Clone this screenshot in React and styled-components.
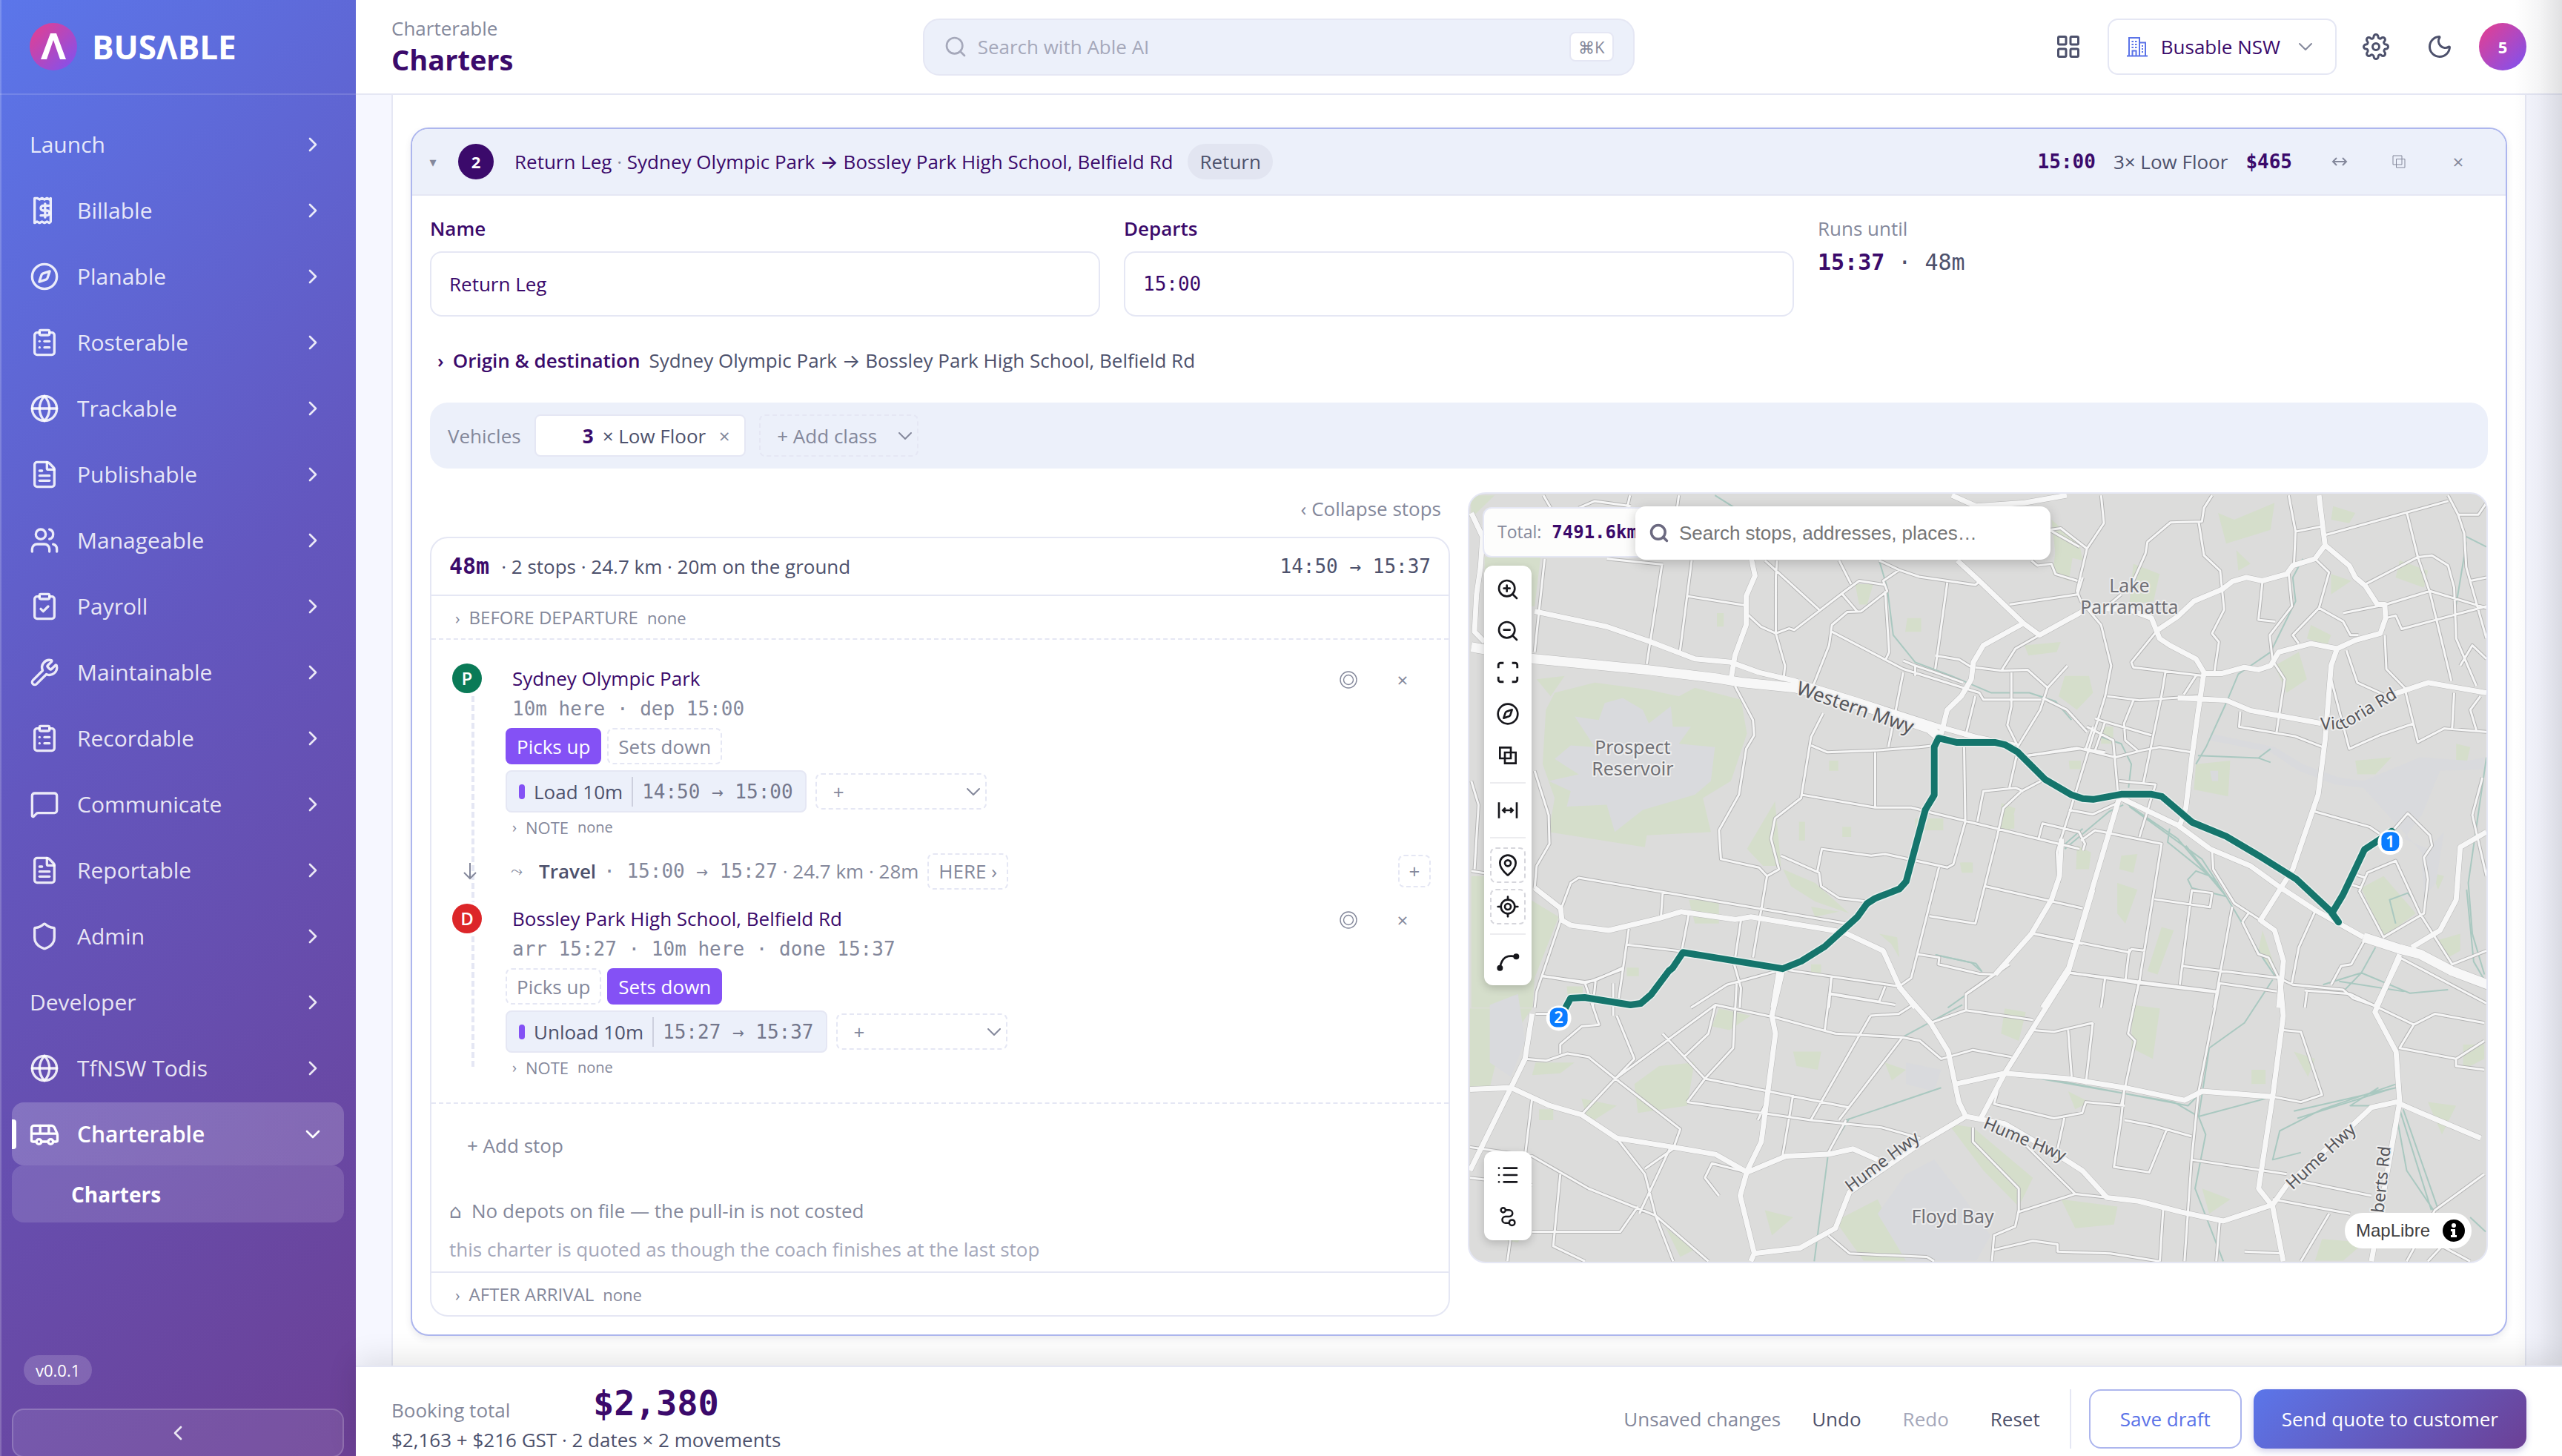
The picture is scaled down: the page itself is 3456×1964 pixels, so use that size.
import React, { useState } from 'react';
import styled, { createGlobalStyle, css } from 'styled-components';
import {
    ChevronDown, ChevronLeft, ChevronRight, ClipboardCheck, ClipboardList, Compass, FileText,
    Globe, LayoutGrid, List, LocateFixed, MapPin, Maximize, MessageSquare, Moon, Search,
    Shield, Users, Wrench, ZoomIn, ZoomOut,
} from 'lucide-react';
import { FiSettings } from 'react-icons/fi';

const sans = '"Open Sans", Inter, "DejaVu Sans", sans-serif';
const mono = '"DejaVu Sans Mono", "Liberation Mono", monospace';

const color = {
    ink: '#3b0a6b',
    text: '#4d516c',
    muted: '#84889b',
    faint: '#a5a8ba',
    line: '#e5e7f4',
    fill: '#ecf0fa',
    violet: '#8451f5',
    blue: '#5b73e8',
};

const GlobalStyle = createGlobalStyle`
    * { box-sizing: border-box; }
    body {
        margin: 0;
        background: #f6f7ff;
        color: ${color.text};
        font-family: ${sans};
        font-size: 26px;
        line-height: 40px;
    }
    button, input, select { font: inherit; color: inherit; margin: 0; }
    button { border: 0; background: none; padding: 0; cursor: pointer; }
    a { color: inherit; text-decoration: none; }
    ul { list-style: none; margin: 0; padding: 0; }
`;

/* ---------- icons that the package does not have in this shape ---------- */

const ReceiptIcon = (props) => (
    <svg width="40" height="40" viewBox="0 0 24 24" fill="none" stroke="currentColor" strokeWidth="2" strokeLinecap="round" strokeLinejoin="round" {...props}>
        <path d="M4 2v20l2-1 2 1 2-1 2 1 2-1 2 1 1-1V2l-1 1-2-1-2 1-2-1-2 1-2-1Z" />
        <path d="M15.500 8H11a2 2 0 1 0 0 4h3a2 2 0 1 1 0 4H9M12.500 17.500v-11" />
    </svg>
);

const BusIcon = (props) => (
    <svg width="40" height="40" viewBox="0 0 24 24" fill="none" stroke="currentColor" strokeWidth="2" strokeLinecap="round" strokeLinejoin="round" {...props}>
        <path d="M4.500 18h-2a1 1 0 0 1-1-1V7a2 2 0 0 1 2-2h14a3 3 0 0 1 2.600 1.600l2 4.400c.3.7.4 1.300.4 2v4a1 1 0 0 1-1 1h-1.500M10 18h4" />
        <path d="M1.500 11.500h20.500M8.500 5v6.500M15.500 5v6.500" />
        <circle cx="7.500" cy="18" r="2" />
        <circle cx="17" cy="18" r="2" />
    </svg>
);

const TowerIcon = () => (
    <svg width="28" height="28" viewBox="0 0 28 28" fill="none" stroke="currentColor" strokeWidth="2">
        <path d="M3 26V2h14v24M17 8.500h8V26M0 26.500h28M7.500 26v-6.500h5V26" />
        <path d="M6.500 7h2.500M11 7h2.500M6.500 11h2.500M11 11h2.500M6.500 15h2.500M11 15h2.500M20 13h2M20 17h2M20 21h2" />
    </svg>
);

const OverlapIcon = () => (
    <svg width="32" height="32" viewBox="0 0 24 24" fill="none" stroke="currentColor" strokeWidth="2">
        <path d="M4 4h11v11H4zM9 9h11v11H9z" />
    </svg>
);

const MeasureIcon = () => (
    <svg width="32" height="32" viewBox="0 0 24 24" fill="none" stroke="currentColor" strokeWidth="2">
        <path d="M3 4v16M21 4v16M7 12h10M9.500 9.500 7 12l2.500 2.500M14.500 9.500 17 12l-2.500 2.500" />
    </svg>
);

const CurveIcon = () => (
    <svg width="32" height="32" viewBox="0 0 24 24" fill="none" stroke="currentColor" strokeWidth="2">
        <path d="M4 18C6 8 11 5 20 7" />
        <circle cx="4" cy="18.500" r="2" fill="currentColor" />
        <circle cx="20.500" cy="7" r="2" fill="currentColor" />
    </svg>
);

const RouteIcon = () => (
    <svg width="30" height="30" viewBox="0 0 24 24" fill="none" stroke="currentColor" strokeWidth="2">
        <circle cx="7" cy="5" r="2.500" />
        <circle cx="16.500" cy="18.500" r="3" />
        <path d="M10 5h3.500a3.500 3.500 0 0 1 0 7H9.500a3.500 3.500 0 0 0 0 7H13" />
    </svg>
);

const CopyIcon = () => (
    <svg width="18" height="18" viewBox="0 0 18 18" fill="none" stroke="currentColor">
        <path d="M1 1h12v12H1zM5.500 5.500H17V17H5.500z" />
    </svg>
);

const SwapIcon = () => (
    <svg width="22" height="14" viewBox="0 0 22 14" fill="none" stroke="currentColor" strokeWidth="2">
        <path d="M2 7h18M7 2 2 7l5 5M15 2l5 5-5 5" />
    </svg>
);

const RingIcon = () => (
    <svg width="24" height="24" viewBox="0 0 24 24" fill="none" stroke="currentColor" strokeWidth="1.400">
        <circle cx="12" cy="12" r="11" />
        <circle cx="12" cy="12" r="6.500" />
    </svg>
);

/* ---------- shell ---------- */

const Shell = styled.div`
    display: flex;
    height: 100vh;
    overflow: hidden;
    position: relative;
`;

const EdgeShade = styled.div`
    position: absolute;
    inset: 0 0 0 auto;
    width: 64px;
    background: linear-gradient(to right, rgba(70, 70, 110, 0), rgba(60, 60, 80, 0.05) 50%, rgba(40, 40, 50, 0.14));
    pointer-events: none;
`;

const Sidebar = styled.aside`
    flex: 0 0 480px;
    display: flex;
    flex-direction: column;
    color: rgba(255, 255, 255, 0.87);
    background: linear-gradient(135deg, #5b76ea 0%, #6357bf 45%, #6c4095 100%);
    box-shadow: inset 2px 0 0 rgba(255, 255, 255, 0.2);
`;

const Brand = styled.div`
    display: flex;
    align-items: center;
    gap: 20px;
    height: 128px;
    padding: 0 40px;
    border-bottom: 2px solid rgba(255, 255, 255, 0.14);
    color: white;
    font-size: 44px;
    font-weight: 700;
`;

const Nav = styled.nav`
    flex: 1;
    padding: 24px 16px;
    ul {
        display: flex;
        flex-direction: column;
        gap: 4px;
    }
`;

const NavLink = styled.a`
    display: flex;
    align-items: center;
    gap: 24px;
    height: 85px;
    padding: 0 26px 0 24px;
    border-radius: 16px;
    font-size: 30px;
    font-weight: 500;
    span {
        flex: 1;
    }
    ${(props) => props.$active && css`
        color: white;
        font-weight: 600;
        background: linear-gradient(to right, rgba(255, 255, 255, 0.2), rgba(255, 255, 255, 0.18));
        &::before {
            content: '';
            width: 6px;
            height: 40px;
            margin: 0 -24px 0 -24px;
            border-radius: 0 4px 4px 0;
            background: white;
        }
        svg:first-of-type {
            margin-left: 18px;
        }
    `}
`;

const SubLink = styled.a`
    display: flex;
    align-items: center;
    height: 77px;
    padding-left: 80px;
    border-radius: 16px;
    background: rgba(255, 255, 255, 0.13);
    color: white;
    font-size: 28px;
    font-weight: 700;
`;

const SidebarFoot = styled.div`
    display: flex;
    flex-direction: column;
    align-items: flex-start;
    gap: 32px;
    padding: 0 16px;
`;

const Version = styled.span`
    margin-left: 16px;
    padding: 0 16px;
    border-radius: 20px;
    background: rgba(255, 255, 255, 0.17);
    color: white;
    font-size: 22px;
    font-weight: 500;
`;

const CollapseButton = styled.button`
    display: flex;
    align-items: center;
    justify-content: center;
    width: 100%;
    height: 66px;
    margin-bottom: -2px;
    border: 2px solid rgba(255, 255, 255, 0.18);
    border-radius: 16px;
    background: rgba(255, 255, 255, 0.09);
`;

const Page = styled.div`
    flex: 1;
    min-width: 0;
    display: flex;
    flex-direction: column;
`;

const Header = styled.header`
    flex: none;
    display: flex;
    align-items: center;
    justify-content: space-between;
    height: 128px;
    padding: 0 48px;
    border-bottom: 2px solid ${color.line};
    background: white;
`;

const Heading = styled.div`
    padding-bottom: 6px;
    color: ${color.muted};
    h1 {
        margin: 0;
        color: ${color.ink};
        font-size: 38px;
        font-weight: 700;
        line-height: 44px;
    }
`;

const SearchBox = styled.label`
    display: flex;
    align-items: center;
    gap: 14px;
    flex: 0 1 960px;
    height: 77px;
    padding: 0 26px;
    border: 2px solid ${color.line};
    border-radius: 22px;
    background: ${color.fill};
    color: ${color.faint};
    input {
        flex: 1;
        min-width: 0;
        border: 0;
        padding: 0;
        background: none;
        outline: 0;
        &::placeholder {
            color: ${color.faint};
            opacity: 1;
        }
    }
    kbd {
        width: 60px;
        border: 2px solid ${color.line};
        border-radius: 8px;
        background: white;
        color: ${color.muted};
        font: 22px/36px ${sans};
        text-align: center;
    }
`;

const HeaderTools = styled.div`
    display: flex;
    align-items: center;
    gap: 20px;
`;

const ToolButton = styled.button`
    display: grid;
    place-items: center;
    width: 66px;
    height: 66px;
    color: ${color.text};
`;

const OrgButton = styled.button`
    display: flex;
    align-items: center;
    gap: 18px;
    height: 76px;
    padding: 0 24px;
    border: 2px solid ${color.line};
    border-radius: 14px;
    color: ${color.ink};
    font-weight: 500;
    svg:first-child {
        color: ${color.blue};
    }
    svg:last-child {
        color: ${color.muted};
    }
`;

const Avatar = styled.button`
    width: 64px;
    height: 64px;
    border-radius: 50%;
    background: linear-gradient(135deg, #e83e8c, #7c52f4);
    color: white;
    font-size: 22px;
    font-weight: 700;
`;

const Content = styled.main`
    flex: 1;
    min-height: 0;
    overflow: hidden;
    padding: 0 48px;
`;

const BookingCard = styled.div`
    min-height: 100%;
    padding: 44px 24px 40px;
    border: solid ${color.line};
    border-width: 0 2px;
    background: white;
`;

/* ---------- leg card ---------- */

const LegCard = styled.section`
    border: 2px solid #adb6ee;
    border-radius: 24px;
    background: white;
    overflow: hidden;
    box-shadow: 0 4px 10px rgba(60, 60, 90, 0.1);
`;

const LegHead = styled.div`
    display: flex;
    align-items: center;
    height: 90px;
    padding-left: 20px;
    padding-right: 24px;
    border-bottom: 2px solid ${color.line};
    background: ${color.fill};
`;

const Twist = styled.button`
    width: 16px;
    margin-right: 26px;
    color: ${color.muted};
    font-size: 18px;
`;

const LegNumber = styled.span`
    width: 48px;
    margin-right: 28px;
    border-radius: 50%;
    background: ${color.ink};
    color: white;
    font-size: 22px;
    font-weight: 700;
    line-height: 48px;
    text-align: center;
`;

const LegTitle = styled.h2`
    margin: 0 20px 0 0;
    color: ${color.ink};
    font-size: 26px;
    font-weight: 500;
    i {
        color: ${color.muted};
        font-style: normal;
    }
`;

const Tag = styled.span`
    padding: 0 16px;
    border-radius: 24px;
    background: #e2e5f1;
    line-height: 48px;
`;

const LegMeta = styled.div`
    display: flex;
    gap: 24px;
    margin-left: auto;
    margin-right: 24px;
`;

const Mono = styled.span`
    font-family: ${mono};
    font-size: ${(props) => props.$size || 26}px;
    font-weight: ${(props) => (props.$bold ? 700 : 400)};
    color: ${(props) => (props.$bold ? color.ink : 'inherit')};
`;

const GlyphButton = styled.button`
    display: grid;
    place-items: center;
    width: ${(props) => props.$width || 80}px;
    color: ${color.muted};
`;

const LegBody = styled.div`
    padding: 24px;
`;

const Fields = styled.div`
    display: grid;
    grid-template-columns: repeat(3, 1fr);
    gap: 32px;
`;

const Field = styled.label`
    display: block;
    color: ${color.ink};
    font-weight: 600;
    input {
        display: block;
        width: 100%;
        height: 88px;
        margin-top: 11px;
        padding: 0 24px;
        border: 2px solid ${color.line};
        border-radius: 16px;
        background: white;
        font-family: ${(props) => (props.$mono ? mono : sans)};
        font-weight: 400;
    }
`;

const RunsUntil = styled.div`
    color: ${color.muted};
    p {
        margin: 6px 0 0;
        color: ${color.text};
    }
`;

const Disclosure = styled.button`
    display: flex;
    gap: 12px;
    margin: 39px 0 37px;
    padding-left: 10px;
    strong {
        color: ${color.ink};
        font-weight: 600;
    }
`;

const VehicleBar = styled.div`
    display: flex;
    align-items: center;
    gap: 18px;
    height: 89px;
    padding: 0 24px;
    border-radius: 24px;
    background: ${color.fill};
    color: ${color.muted};
`;

const VehicleChip = styled.div`
    display: flex;
    align-items: center;
    gap: 12px;
    height: 57px;
    padding-right: 14px;
    border: 2px solid ${color.line};
    border-radius: 8px;
    background: white;
    color: ${color.text};
    input {
        width: 78px;
        padding: 0;
        border: 0;
        background: none;
        color: ${color.ink};
        font-weight: 700;
        text-align: right;
    }
    button {
        width: 26px;
        color: ${color.muted};
    }
`;

const Picker = styled.div`
    position: relative;
    width: ${(props) => props.$width}px;
    height: ${(props) => props.$height || 49}px;
    color: ${color.muted};
    select {
        appearance: none;
        width: 100%;
        height: 100%;
        padding: 0 22px;
        border: 2px dashed ${color.line};
        border-radius: 8px;
        background: none;
    }
    svg {
        position: absolute;
        right: 2px;
        top: 50%;
        margin-top: -16px;
        pointer-events: none;
    }
`;

const Columns = styled.div`
    display: grid;
    grid-template-columns: repeat(2, minmax(0, 1fr));
    align-items: start;
    gap: 24px;
    margin-top: 32px;
`;

const StopsColumn = styled.div`
    display: flex;
    flex-direction: column;
    gap: 16px;
`;

const CollapseStops = styled.button`
    align-self: flex-end;
    margin-right: 12px;
    color: ${color.muted};
    line-height: 44px;
`;

const Timeline = styled.div`
    border: 2px solid ${color.line};
    border-radius: 24px;
`;

const TimelineHead = styled.div`
    display: flex;
    align-items: center;
    gap: 16px;
    height: 78px;
    padding: 0 24px;
    border-bottom: 2px solid ${color.line};
    > :last-child {
        margin-left: auto;
    }
`;

const FoldRow = styled.button`
    display: flex;
    align-items: center;
    gap: 12px;
    width: 100%;
    height: 57px;
    padding-left: 32px;
    color: ${color.muted};
    font-size: 22px;
    strong {
        font-size: 24px;
        font-weight: 500;
    }
`;

const NoteRow = styled(FoldRow)`
    height: 24px;
    margin-bottom: 3px;
    padding-left: 0;
    font-size: 20px;
    strong {
        font-size: 22px;
    }
`;

const Stops = styled.div`
    display: flex;
    flex-direction: column;
    gap: 20px;
    padding: 32px 24px;
    border: dashed ${color.line};
    border-width: 2px 0;
    background: repeating-linear-gradient(to bottom, ${color.line} 0 8px, transparent 8px 12px) 54px 76px / 4px calc(100% - 124px) no-repeat;
`;

const Stop = styled.div`
    display: grid;
    grid-template-columns: 40px 1fr auto;
    column-gap: 41px;
    padding-left: 4px;
`;

const StopBadge = styled.span`
    height: 40px;
    border-radius: 50%;
    background: ${(props) => props.$color};
    color: white;
    font-size: 24px;
    font-weight: 600;
    line-height: 40px;
    text-align: center;
    box-shadow: 0 0 0 4px white;
`;

const StopBody = styled.div`
    h3 {
        margin: 0;
        color: ${color.ink};
        font-size: 26px;
        font-weight: 500;
    }
    p {
        height: 40px;
        margin: 0 0 7px;
        color: ${color.muted};
    }
`;

const StopActions = styled.div`
    display: flex;
    align-items: flex-start;
    button {
        height: 44px;
    }
`;

const ButtonRow = styled.div`
    display: flex;
    align-items: center;
    gap: ${(props) => props.$gap || 8}px;
    margin: 0 0 8px -9px;
`;

const Toggle = styled.button`
    height: 49px;
    padding: 0 13px;
    border: 2px dashed ${color.line};
    border-radius: 8px;
    color: ${color.muted};
    ${(props) => props.$on && css`
        border: 2px solid ${color.violet};
        background: ${color.violet};
        color: white;
    `}
`;

const Activity = styled.div`
    display: flex;
    align-items: center;
    gap: 12px;
    height: 57px;
    padding: 0 16px;
    border: 2px solid ${color.line};
    border-radius: 8px;
    background: ${color.fill};
    font-weight: 500;
    &::before {
        content: '';
        width: 8px;
        height: 20px;
        border-radius: 4px;
        background: ${color.violet};
    }
    span {
        padding-left: 12px;
        border-left: 2px solid #cdd0de;
        color: #74778c;
    }
`;

const Travel = styled.div`
    display: flex;
    align-items: center;
    height: 48px;
    color: ${color.muted};
    > svg {
        margin: 0 45px 0 18px;
    }
    i {
        font-size: 20px;
        font-style: normal;
    }
    strong {
        margin: 0 10px 0 22px;
        color: ${color.text};
        font-weight: 600;
    }
    > :last-child {
        width: 44px;
        height: 44px;
        margin-left: auto;
        padding: 0;
    }
`;

const Here = styled(Toggle)`
    margin-left: 12px;
    font-weight: 500;
`;

const Closing = styled.div`
    padding: 30px 24px 4px;
    border-bottom: 2px solid ${color.line};
    color: ${color.muted};
    line-height: 52px;
    button {
        display: block;
        margin: 0 0 36px 24px;
    }
    p {
        margin: 0;
    }
    small {
        display: block;
        color: ${color.faint};
        font-size: 26px;
    }
`;

/* ---------- map ---------- */

const MapFrame = styled.div`
    position: relative;
    height: 1040px;
    border: 2px solid ${color.line};
    border-radius: 24px;
    overflow: hidden;
    background: #dcdcdb;
    > svg {
        display: block;
        width: 100%;
        height: 100%;
    }
`;

const Distance = styled.div`
    position: absolute;
    left: 18px;
    top: 18px;
    width: 240px;
    height: 68px;
    padding: 0 18px;
    border: 2px solid ${color.line};
    border-radius: 12px;
    background: rgba(255, 255, 255, 0.92);
    color: ${color.muted};
    font-size: 23px;
    line-height: 62px;
    white-space: nowrap;
    overflow: hidden;
    ${Mono} {
        margin-left: 8px;
    }
`;

const MapSearch = styled.label`
    position: absolute;
    left: 224px;
    top: 17px;
    display: flex;
    align-items: center;
    gap: 13px;
    width: 560px;
    height: 72px;
    padding: 0 18px;
    border-radius: 14px;
    background: white;
    color: #6b6980;
    box-shadow: 0 4px 16px rgba(0, 0, 0, 0.2);
    input {
        flex: 1;
        border: 0;
        padding: 0;
        outline: 0;
        font-family: "Liberation Sans", Arial, sans-serif;
        &::placeholder {
            color: #757575;
            opacity: 1;
        }
    }
`;

const MapTools = styled.div`
    position: absolute;
    left: 20px;
    ${(props) => (props.$low ? 'bottom: 29px;' : 'top: 97px;')}
    display: flex;
    flex-direction: column;
    gap: 8px;
    padding: 8px;
    border-radius: 12px;
    background: white;
    color: #17171c;
    box-shadow: 0 4px 12px rgba(0, 0, 0, 0.18);
    hr {
        width: 100%;
        margin: 4px 0;
        border: 0;
        border-top: 2px solid #ececef;
    }
`;

const MapButton = styled.button`
    display: grid;
    place-items: center;
    width: 48px;
    height: 48px;
    border-radius: 8px;
    border: ${(props) => (props.$dashed ? '2px dashed #d6d6dc' : '0')};
`;

const Attribution = styled.div`
    position: absolute;
    right: 20px;
    bottom: 18px;
    display: flex;
    align-items: center;
    gap: 16px;
    height: 48px;
    padding: 0 8px 0 15px;
    border-radius: 24px;
    background: white;
    color: #404040;
    font-family: "Liberation Sans", Arial, sans-serif;
    font-size: 24px;
`;

/* ---------- bottom bar ---------- */

const BottomBar = styled.footer`
    flex: none;
    display: flex;
    align-items: flex-start;
    justify-content: space-between;
    height: 122px;
    padding: 0 48px;
    border-top: 2px solid ${color.line};
    background: white;
    box-shadow: 0 -8px 40px rgba(0, 0, 0, 0.11);
    z-index: 1;
`;

const Totals = styled.div`
    display: grid;
    grid-template-columns: 272px auto;
    align-items: end;
    padding-top: 20px;
    span {
        color: ${color.muted};
    }
    ${Mono} {
        color: ${color.ink};
        line-height: 58px;
    }
    p {
        grid-column: 1 / 3;
        margin: 0;
    }
`;

const Actions = styled.div`
    display: flex;
    align-items: center;
    gap: 16px;
    padding-top: 30px;
    color: ${color.muted};
    span {
        margin-right: 6px;
    }
    hr {
        align-self: stretch;
        width: 2px;
        margin: 0 8px 0 4px;
        border: 0;
        background: ${color.line};
    }
`;

const TextButton = styled.button`
    padding: 0 20px;
    color: ${color.text};
    font-weight: 500;
    &:disabled {
        color: ${color.faint};
    }
`;

const BigButton = styled.button`
    height: 80px;
    padding: 0 40px;
    border: 2px solid #adb6ee;
    border-radius: 16px;
    color: ${color.blue};
    font-weight: 500;
    ${(props) => props.$primary && css`
        padding: 0 38px;
        border: 0;
        background: linear-gradient(135deg, #5b76ea, #6c4095);
        color: white;
        box-shadow: 0 4px 8px rgba(80, 70, 180, 0.25);
    `}
`;

const navItems = [
    { label: 'Launch' },
    { label: 'Billable', icon: ReceiptIcon },
    { label: 'Planable', icon: Compass },
    { label: 'Rosterable', icon: ClipboardList },
    { label: 'Trackable', icon: Globe },
    { label: 'Publishable', icon: FileText },
    { label: 'Manageable', icon: Users },
    { label: 'Payroll', icon: ClipboardCheck },
    { label: 'Maintainable', icon: Wrench },
    { label: 'Recordable', icon: ClipboardList },
    { label: 'Communicate', icon: MessageSquare },
    { label: 'Reportable', icon: FileText },
    { label: 'Admin', icon: Shield },
    { label: 'Developer' },
    { label: 'TfNSW Todis', icon: Globe },
    { label: 'Charterable', icon: BusIcon, children: ['Charters'] },
];

const stops = [
    {
        letter: 'P', color: '#0a7a57', name: 'Sydney Olympic Park', times: '10m here · dep 15:00',
        role: 'Picks up', activity: 'Load 10m', window: '14:50 → 15:00',
    },
    {
        letter: 'D', color: '#dc2629', name: 'Bossley Park High School, Belfield Rd', times: 'arr 15:27 · 10m here · done 15:37',
        role: 'Sets down', activity: 'Unload 10m', window: '15:27 → 15:37',
    },
];

// Road geometry, one entry per map sheet; every sheet has its own grid.
const sheets = [
    {
        transform: 'translate(-20 -24) scale(0.542 0.4591)',
        parks: 'M250 640L350 610L480 630L560 650L600 625L715 660L730 760L690 900L620 950L640 1050L480 1060L475 1095L235 1050L250 950L220 850L228 690ZM40 58H100L42 125ZM75 240H215L200 385H75ZM42 1180H80L190 1250L260 1300L200 1480L195 1568H42ZM730 1100L800 960L815 1150L770 1150ZM820 1160L900 1200L985 1290L900 1255L840 1210ZM480 150H560L545 200H480ZM585 1250H660V1320H600ZM430 1450H460V1475H430ZM860 1020H875V1075H860ZM968 1035H990V1065H968ZM935 840H958V870H935ZM655 405H672V445H655ZM1130 420H1165V460H1125ZM1000 320H1045L1030 380H1010ZM890 1440H915V1465H890ZM1265 1140H1290V1165H1265ZM890 1270L960 1285L900 1300ZM1150 1010H1220V1045H1150ZM1060 1350L1105 1360L1110 1420L1090 1380ZM1365 965L1400 980L1385 1050L1362 1040ZM280 1505H320V1550H285ZM205 600L275 590L240 650ZM1490 130L1560 200L1568 250L1500 230Z',
        water: 'M300 710L360 720L375 670L420 655L470 690L485 730L540 680L545 740L590 740L560 790L650 800L640 900L600 940L470 985L400 1050L380 970L280 975L290 930L235 900L310 880L250 835L290 795L350 800Z',
        rail: 'M1060 250L1080 330L1095 470L1150 550L1240 590L1340 640L1435 640L1500 665L1540 720M650 58L700 95M1200 1412L1290 1435L1315 1460M1515 1095L1568 1040',
        wide: 'M42 505L90 515L200 540L480 572L660 598L720 610L850 625L930 650L1050 690L1185 745L1215 775',
        main: 'M42 110L70 180L65 270L55 350L50 460L75 490M200 400L380 445L490 490L600 540L690 550L760 580L850 605L1000 660L1210 740L1300 770L1400 795M740 240L750 295L728 355L728 440L700 530L690 600M1255 250L1310 310L1420 435L1460 470L1568 400M1420 435L1320 500L1295 550L1290 600L1265 650L1230 690L1215 760M200 1215L265 1275L268 1310L290 1325L385 1340L510 1305L565 1285L700 1308L740 1300L970 1345L1070 1400L1110 1505L1150 1568M810 1460L795 1568M1350 1470L1440 1350L1490 1250L1510 1180L1515 1070',
        minor: 'M225 245L200 520M222 58L240 95M310 95L350 75L440 90M438 58L430 100M560 58L555 100M518 262L480 555M592 250L580 360L562 525M580 355L725 382M380 245L520 262M728 405L765 445L802 465L825 560L822 595M802 465L835 450L848 455L975 340L1010 310L1075 322M775 250L910 395M805 250L802 300L802 465M960 250L990 320M965 345L1005 400M1110 278L1070 310L1080 340L1015 400L980 402L942 440L935 500L895 620M1075 340L1085 520L1075 545M942 460L1120 570M1060 250L1110 278L1160 298L1300 322L1312 310M1230 315L1200 570M1120 545L1150 560L1200 580L1270 610M1150 560V590M1120 570L1310 640L1320 660L1465 660M1120 580L1083 800M700 620L745 720L748 765L728 805L710 940L660 1045L665 1130L760 1155L780 1180L810 1160L790 1070L800 1010L865 950L890 770L920 700M780 1180L745 1420M890 795L930 815L1050 810L1160 800L1200 795M1050 815V975M865 940L1050 978L1140 978L1180 990L1560 1100M1272 800L1275 1020M200 870L235 1000L237 1085L205 1150L200 1215M42 1165L78 1172M42 900L60 970L50 1160M265 1280L290 1200L310 1185L980 1320M520 1225L515 1305M265 1310L205 1520L200 1568M585 1290L568 1395M435 1335L410 1540M430 1382L570 1402M220 1475L325 1492L350 1488L420 1450M352 1490L345 1568M715 1310L698 1440L715 1510L712 1568M820 1455L680 1500L590 1568M820 1455L1110 1505L1140 1480L1210 1150M940 1480L935 1568M935 1525L1060 1550L1075 1505M815 1120L910 1170L915 1210L960 1245L1030 1255M905 1170L917 1100L1040 1120L1075 1115L1230 1155L1245 1145L1275 1020M1300 650L1275 770M1305 1020L1320 930L1400 920L1420 930M1385 920L1405 815M1480 890L1415 930L1370 980L1355 1060L1300 1320L1185 1298M1325 1210L1568 1275M1155 1410L1210 1420L1208 1440L1310 1468L1350 1470M1275 1530L1385 1440M1430 825L1560 805M1445 1350L1568 1380M1200 530L1260 542L1295 568M1385 380L1555 350L1568 300M1365 575L1400 510L1460 470M1300 565L1365 575L1430 572L1480 625L1530 560M1390 580V680L1380 735L1405 795M1480 625L1462 690L1405 800M1440 250L1455 265L1490 260L1500 290L1555 310M1485 160L1560 210',
    },
    {
        transform: 'translate(620 -24) scale(0.5459 0.4591)',
        parks: 'M665 850L750 840L745 945L660 925ZM340 590H400L410 640L370 690L325 650ZM1130 910L1215 840L1240 910L1180 1000L1150 960ZM1060 840L1150 830L1110 880H1065ZM1075 1215L1130 1180L1210 1290L1130 1360ZM720 110L760 130L860 80L850 160L740 200ZM510 260L575 290L560 370L500 380ZM950 440L1000 470L990 500L940 480ZM480 1120L520 1115L510 1170L475 1160ZM830 1340L870 1480L820 1400ZM580 1330L610 1340L570 1470L545 1460ZM320 190L365 200L350 310L310 290ZM370 1090L405 1110L400 1160L368 1160ZM1005 90L1060 110L1045 140L1000 130ZM1310 790L1345 800L1335 850L1310 840ZM1260 1370L1320 1350V1400L1290 1420ZM470 1200L520 1220L490 1320L470 1290ZM430 740H460V790H430ZM1170 250L1240 280L1230 330L1160 300ZM1000 290L1050 310L1000 350ZM860 560L920 520L940 600L890 640ZM190 1000H215V1040H190ZM80 1140H112V1170H85ZM240 500L330 490L320 520L250 530ZM765 220L800 260L770 280ZM350 840H380V865H352ZM1250 1170L1280 1180L1265 1220Z',
        water: 'M700 760L860 800L930 850L1020 890L1080 900L1220 830L1340 840L1380 830V865L1270 870L1225 1000L1180 1070L1240 1100L1280 1050L1260 1200L1230 1240L1225 1110L1080 920L1010 910L920 870L850 815L700 780ZM700 870H720V900H705Z',
        rail: 'M1315 120L1335 200L1310 380M1335 180L1385 210M930 245L905 300L912 370L850 520L770 585L740 670L690 800L665 850M670 825L820 832L850 805M820 832L850 845M485 960L620 1070L740 1240M500 975L680 1130L740 1240M600 1040L595 1080L720 1200M640 1090L740 1240M700 1180L665 1165L645 1190L655 1215L740 1240L830 1420L870 1490M430 770L480 790L505 850L498 920M1385 830L1340 1200L1350 1350L1380 1470M1160 1320L1145 1250L1190 1230L1215 1270M980 1500L1075 1465L1110 1390M1030 1520L1075 1465L1195 1525L1290 1515M1020 1490L1180 1520M340 1100L450 990L485 970M20 1412L120 1438L135 1462M50 1568L95 1530',
        wide: 'M1080 1360L1170 1395L1220 1410L1300 1460L1400 1505',
        main: 'M470 945L620 1030L700 1100L800 1150L870 1210L960 1280L1080 1360M970 58L985 205L960 245L905 265L890 290L830 310L790 300L755 312L730 335L660 370L620 415L570 455M985 205L1045 265L1060 300L1085 325L1115 380L1133 380L1135 420L1122 465L1060 485L1015 510L950 495L870 520L850 560L820 572L785 565L730 583H685M400 390L500 395L555 420L575 480L600 500L665 540L685 580L670 700L655 830L640 980L625 1030M1015 510L1000 560L985 780L968 940L905 1160L825 1310L860 1340L882 1430L870 1568M620 655L740 662L800 692L975 730M1140 650L1240 610L1385 640M60 58L120 90L240 80L345 58M1385 1050L1320 1095L1310 1250L1270 1340L1200 1390M1170 1420L1110 1568M475 950L350 1450L285 1568',
        minor: 'M430 58L437 140L395 215L370 340L380 370L430 440L455 560L440 650L355 980L320 1110L325 1200M705 58L685 95L680 135L602 138L545 195L540 230L510 310M672 138L685 235L725 280L735 395L705 465L722 490L710 585M895 58L912 165L908 265M912 165L975 150M985 175L1290 75M1188 110L1215 240L1245 345L1298 605M1290 58L1315 115L1330 170L1335 270L1385 480M1315 115L1365 115L1385 80M1085 320L1215 240L1250 235L1290 265L1305 330L1310 480L1360 620M830 312L820 425L862 430M895 290L903 385L848 470L855 545L885 600L865 755M960 245L995 285L970 390L905 470L920 495M970 390L1030 430L1048 470H1068M1030 405L1135 380L1245 340L1385 390M1135 420L1160 412L1175 452L1385 385M1133 470L1137 570L1182 625L1215 785L1280 745L1385 755M1038 515L1065 610L1130 645M1000 600L1045 805L1120 765L1205 730M570 455L505 550L510 565L685 590M590 575L578 660L535 905M445 650L525 662L670 650M635 645L665 590M510 662L487 730L490 780L520 810M250 825L370 802L465 830L530 810L575 800L655 815M430 722L555 765M395 740L460 780L472 940M440 725L415 810M410 740L392 805M430 722L415 715M387 805L440 815M775 695L772 740L910 768L980 800M475 900L565 910L525 1065M960 990L1095 1035L1120 1055M1150 1050L1190 995L1245 1060L1250 1090L1230 1125L1240 1190L1230 1290L1130 1360L1070 1225L1090 1170L1160 1135L1220 1290L1300 1440L1385 1400M1045 1170L1085 1185M1050 1205L1075 1215M705 1105L708 1160L760 1260L825 1310M350 985L410 998L470 965M380 1075L415 1045L580 1085L525 1490L510 1568M562 1248L700 1272L705 1230L655 1222L625 1500M755 1270L720 1500L710 1568M350 1465L720 1520M630 1445L870 1480M720 1495L865 1520M870 1480L905 1500L1030 1515L1055 1540L1115 1565M940 1520L935 1568M780 1315L820 1410L845 1420L870 1480M780 1315L795 1290M960 1285L920 1390L903 1495M500 1395L490 1490M265 1350L500 1405L505 1395L540 1400M1085 1365L1050 1440L1025 1445L1000 1500M1170 1420L1385 1555M1375 890L1350 1000L1385 1180M275 1070L285 1025L375 1050L390 1085L385 1105M285 655L345 690L395 755M1345 310L1385 300M1305 640L1300 745M1370 650L1345 690L1360 750M440 1480L430 1568M1320 560L1350 500L1385 540M300 160L330 155L395 215M450 380L480 350',
    },
    {
        transform: 'translate(-20 536) scale(0.9542 0.4873)',
        parks: 'M22 330H110L60 470L50 550H22ZM700 650L735 660L820 800L800 880L750 780ZM540 920L600 860L640 1030H580ZM860 860L940 880L935 930L880 940ZM480 450H520L515 500L485 490ZM255 540L290 490L340 480L330 600L260 620ZM960 320L1000 330L990 470L960 440ZM115 480L170 480L150 510L110 515ZM375 330L420 350L390 390L365 380ZM780 330L810 340L800 420L775 400ZM610 480L640 500L620 530ZM180 580L230 600L190 650ZM120 610H140V640H120ZM870 560L900 590L880 610ZM1190 450L1220 470L1210 520ZM1430 430H1460V470L1430 500ZM1380 590L1420 600L1400 680ZM1230 970L1290 980L1260 1030H1220ZM60 890L110 900L90 980L60 970ZM300 940L340 1000L320 1020ZM1060 830L1100 860L1070 900ZM440 890L480 910L450 960ZM1130 500H1150V540H1130Z',
        water: 'M600 900L640 790L680 750L720 850L760 960L740 1030H640ZM50 320L90 290L100 420L80 520L50 480ZM640 480L690 500L680 560L640 540Z',
        rail: 'M815 520L1020 590L1055 630L1150 580M840 525L1040 600L1060 560M720 320L635 410M555 640L690 550M1160 250L1120 370L1070 440L1055 630L1065 680L1050 830L1090 1032M560 635L530 730L510 1032M1335 540L1230 610L1170 670L1160 750L1200 730M1335 550L1190 615M1325 555L1195 635M1310 550L1270 600H1300M1340 610L1385 890M1345 610L1395 890M1335 620L1350 780L1388 890M1440 910L1462 950M1435 0L1445 200L1460 250',
        wide: '',
        main: 'M465 225L450 350L455 400L435 700L415 780L405 850L425 1010L420 1032M22 555L80 550L135 600L180 625L230 690L310 715L370 735L415 785L470 740L530 735L565 720L600 750M110 345L100 470L80 550L22 780M425 1010L490 995L540 940L560 840L660 705L725 630L780 650L850 730L890 780L925 855L970 865L1030 895L1090 920L1160 875L1180 820L1270 660L1300 605L1335 590L1370 620L1455 690M905 0L870 230L780 510L745 640M780 510L710 540M780 510L870 525L950 550L1035 585L1060 560L1160 575M1170 240L1175 350L1160 575L1140 830L1160 880L1175 1032M1340 180L1305 340L1335 450L1340 590L1300 1032M630 270L675 370L700 450L715 590L725 630',
        minor: 'M125 240L185 260L240 220M185 260L205 375L180 380L150 430V455M100 470L130 475L160 455L190 465L228 525L320 665L310 720L270 775M228 525L180 625M228 525L370 320L455 355M230 350L255 470L228 525M225 260V350M295 400L355 525L560 605M455 355L540 400L635 410M325 465L360 400L370 320M330 590L505 640L605 660L660 690M355 525L330 590M400 260L395 440L355 525M635 410L660 420L690 470L735 445L790 465M675 370L725 335L820 362M725 335V290L765 235M530 290L625 320M535 240L525 390M590 350L630 345L650 320M820 390L850 395L905 370M870 390L875 520M970 260L955 400L965 420L945 600M905 370L895 540M635 410L545 640M590 350L505 640M555 640L530 730M480 570L465 740M870 230L970 260L1080 285M1175 390L1200 395L1230 570L1200 590L1160 575M1085 260L1055 560L1045 750L1035 1032M950 550L945 640L935 770L985 785L1010 665M770 560L765 595L850 635L890 620L895 590L950 600M950 640L990 655L1045 685M865 630L855 720M1045 750L1180 790M1200 810L1300 850M1160 860L1270 900M1205 280L1270 290L1360 375L1390 345L1460 370M1360 375L1340 440L1420 470L1460 420M1420 470V490L1460 500M735 660V700L800 830V890L795 935L765 960L762 1032M800 690L880 845L800 895M925 855L880 845M765 1000L820 975L855 985V1005L930 1010L1000 1032M22 715L110 740L190 830L285 905L360 1032M230 690L270 790L285 905L310 1032M110 580L100 740M22 800L110 820M110 950H235L260 880M150 790L140 990L185 1032M80 960L75 1032M415 785L365 760L355 800L375 850M530 960L560 1010L670 1020M670 1020L680 1032M1005 880L1000 1032M1085 920L1080 1032M1120 1005L1175 1010M1460 790L1390 890L1350 1032M1240 900L1200 1032M115 345H145M305 720L262 900M440 600L430 640M1380 1032L1400 990L1440 1032',
    },
];

const ROUTE = 'M128 700L137 683L156 682L218 692L232 690L246 678L270 646L275 642L289 621L424 643L449 633L481 613L525 573L538 555L549 548L582 535L591 525L617 428L629 408V343L635 331L660 337H712L725 340L742 350L779 387L815 408L830 413L844 414L882 407H923L937 410L978 445L1024 464L1068 490L1119 522L1166 566L1176 580L1167 568L1182 543L1211 482L1235 466L1248 457';

const Shapes = styled.g`
    fill: none;
    stroke-linejoin: round;
    path { vector-effect: non-scaling-stroke; }
    .park { fill: #d5decb; }
    .water { fill: #d9dadd; }
    .rail { stroke: #a9c8c0; stroke-width: 2; }
    .minor-case { stroke: #b4b4b4; stroke-width: 5; }
    .minor { stroke: #f6f6f6; stroke-width: 3; }
    .main-case { stroke: #b8b8b8; stroke-width: 8; }
    .main { stroke: #f7f7f7; stroke-width: 7; }
    .wide-case { stroke: #b8b8b8; stroke-width: 14; }
    .wide { stroke: #f7f7f7; stroke-width: 13; }
`;

const Labels = styled.g`
    fill: #707076;
    stroke: #ededed;
    stroke-width: 4;
    paint-order: stroke;
    stroke-linejoin: round;
    font: 25px "Noto Sans", sans-serif;
    text-anchor: middle;
    .road {
        fill: #55555a;
        font-size: 23px;
        text-anchor: start;
    }
    .big {
        font-size: 26px;
    }
`;

const Pin = ({ x, y, children }) => (
    <g>
        <circle cx={x} cy={y + 1} r="17" fill="white" />
        <rect x={x - 12} y={y - 13} width="24" height="26" rx="9" fill="#0a7cff" />
        <text x={x} y={y + 8} fill="white" fontFamily="Noto Sans" fontWeight="600" fontSize="22" textAnchor="middle">{children}</text>
    </g>
);

const layers = [
    ['park', 'parks'], ['water', 'water'], ['rail', 'rail'], ['minor-case', 'minor'], ['main-case', 'main'],
    ['wide-case', 'wide'], ['minor', 'minor'], ['main', 'main'], ['wide', 'wide'],
];

function RouteMap() {
    return (
        <MapFrame>
            <svg viewBox="0 0 1376 1040" preserveAspectRatio="xMinYMid slice">
                <Shapes>
                    {layers.map(([name, key]) => sheets.map((sheet, i) => (
                        <path key={name + i} className={name} d={sheet[key]} transform={sheet.transform} />
                    )))}
                    <path d={ROUTE} stroke="#e9efed" strokeWidth="12" />
                    <path d={ROUTE} stroke="#15756c" strokeWidth="9" strokeLinecap="round" />
                </Shapes>
                <Labels>
                    <text x="893" y="134">Lake</text>
                    <text x="893" y="163">Parramatta</text>
                    <text x="221" y="353">Prospect</text>
                    <text x="221" y="382">Reservoir</text>
                    <text x="654" y="987">Floyd Bay</text>
                    <text className="road big" transform="translate(441 271) rotate(19)">Western Mwy</text>
                    <path id="victoria" d="M1152 320L1186 318L1270 268" stroke="none" fill="none" />
                    <text className="road"><textPath href="#victoria">Victoria Rd</textPath></text>
                    <text className="road" transform="translate(516 946) rotate(-37)">Hume Hwy</text>
                    <text className="road" transform="translate(694 858) rotate(23)">Hume Hwy</text>
                    <text className="road" transform="translate(1114 943) rotate(-43)">Hume Hwy</text>
                    <text className="road" transform="translate(1234 1002) rotate(-84)">Roberts Rd</text>
                </Labels>
                <Pin x={1246} y={471}>1</Pin>
                <Pin x={121} y={709}>2</Pin>
            </svg>
            <Distance>Total: <Mono $size={24} $bold>7491.6km</Mono></Distance>
            <MapSearch>
                <Search size={28} strokeWidth={3} />
                <input placeholder="Search stops, addresses, places…" aria-label="Search the map" />
            </MapSearch>
            <MapTools>
                <MapButton aria-label="Zoom in"><ZoomIn size={32} /></MapButton>
                <MapButton aria-label="Zoom out"><ZoomOut size={32} /></MapButton>
                <MapButton aria-label="Fit"><Maximize size={34} strokeLinecap="butt" /></MapButton>
                <MapButton aria-label="Reset bearing"><Compass size={32} /></MapButton>
                <MapButton aria-label="Layers"><OverlapIcon /></MapButton>
                <hr />
                <MapButton aria-label="Measure"><MeasureIcon /></MapButton>
                <hr />
                <MapButton $dashed aria-label="Drop pin"><MapPin size={32} /></MapButton>
                <MapButton $dashed aria-label="Locate"><LocateFixed size={32} /></MapButton>
                <hr />
                <MapButton aria-label="Shape route"><CurveIcon /></MapButton>
            </MapTools>
            <MapTools $low>
                <MapButton aria-label="Stop list"><List size={32} /></MapButton>
                <MapButton aria-label="Routes"><RouteIcon /></MapButton>
            </MapTools>
            <Attribution>
                <a href="#maplibre">MapLibre</a>
                <svg width="32" height="32" viewBox="0 0 32 32">
                    <circle cx="16" cy="16" r="15" />
                    <circle cx="16" cy="9" r="3" fill="white" />
                    <path d="M12 14h6v8h2v3h-8v-3h2v-5h-2z" fill="white" />
                </svg>
            </Attribution>
        </MapFrame>
    );
}

function StopItem({ stop }) {
    const [role, setRole] = useState(stop.role);
    return (
        <Stop>
            <StopBadge $color={stop.color}>{stop.letter}</StopBadge>
            <StopBody>
                <h3>{stop.name}</h3>
                <p><Mono>{stop.times}</Mono></p>
                <ButtonRow>
                    {['Picks up', 'Sets down'].map((name) => (
                        <Toggle key={name} $on={role === name} onClick={() => setRole(name)}>{name}</Toggle>
                    ))}
                </ButtonRow>
                <ButtonRow $gap={12}>
                    <Activity>{stop.activity}<Mono>{stop.window}</Mono></Activity>
                    <Picker $width={231}>
                        <select aria-label="Add activity"><option>+</option></select>
                        <ChevronDown size={32} strokeWidth={1.5} />
                    </Picker>
                </ButtonRow>
                <NoteRow><span>›</span><strong>NOTE</strong><span>none</span></NoteRow>
            </StopBody>
            <StopActions>
                <GlyphButton $width={70} aria-label="Centre on map"><RingIcon /></GlyphButton>
                <GlyphButton $width={76} aria-label="Remove stop">×</GlyphButton>
            </StopActions>
        </Stop>
    );
}

function Leg() {
    return (
        <LegCard>
            <LegHead>
                <Twist aria-label="Fold leg">▾</Twist>
                <LegNumber>2</LegNumber>
                <LegTitle>Return Leg <i>·</i> Sydney Olympic Park → Bossley Park High School, Belfield Rd</LegTitle>
                <Tag>Return</Tag>
                <LegMeta>
                    <Mono $bold>15:00</Mono>
                    <span>3× Low Floor</span>
                    <Mono $bold>$465</Mono>
                </LegMeta>
                <GlyphButton aria-label="Reverse leg"><SwapIcon /></GlyphButton>
                <GlyphButton aria-label="Duplicate leg"><CopyIcon /></GlyphButton>
                <GlyphButton aria-label="Remove leg">×</GlyphButton>
            </LegHead>
            <LegBody>
                <Fields>
                    <Field>Name<input defaultValue="Return Leg" /></Field>
                    <Field $mono>Departs<input defaultValue="15:00" /></Field>
                    <RunsUntil>
                        Runs until
                        <p><Mono $size={30} $bold>15:37</Mono><Mono $size={30}> · 48m</Mono></p>
                    </RunsUntil>
                </Fields>
                <Disclosure>
                    <strong>›</strong>
                    <strong>Origin &amp; destination</strong>
                    <span>Sydney Olympic Park → Bossley Park High School, Belfield Rd</span>
                </Disclosure>
                <VehicleBar>
                    Vehicles
                    <VehicleChip>
                        <input defaultValue="3" aria-label="Low Floor vehicles" />
                        <span>× Low Floor</span>
                        <button aria-label="Remove class">×</button>
                    </VehicleChip>
                    <Picker $width={215} $height={57}>
                        <select aria-label="Add class"><option>+ Add class</option></select>
                        <ChevronDown size={32} strokeWidth={1.5} />
                    </Picker>
                </VehicleBar>
                <Columns>
                    <StopsColumn>
                        <CollapseStops>‹ Collapse stops</CollapseStops>
                        <Timeline>
                            <TimelineHead>
                                <Mono $size={30} $bold>48m</Mono>
                                <span>· 2 stops · 24.7 km · 20m on the ground</span>
                                <Mono>14:50 → 15:37</Mono>
                            </TimelineHead>
                            <FoldRow><span>›</span><strong>BEFORE DEPARTURE</strong><span>none</span></FoldRow>
                            <Stops>
                                <StopItem stop={stops[0]} />
                                <Travel>
                                    <svg width="20" height="24" viewBox="0 0 20 24" fill="none" stroke="currentColor" strokeWidth="2">
                                        <path d="M10 1v21M2 14l8 8 8-8" />
                                    </svg>
                                    <i>⤳</i>
                                    <strong>Travel</strong>
                                    <Mono>· 15:00 → 15:27</Mono>
                                    <span>&nbsp;· 24.7 km · 28m</span>
                                    <Here>HERE ›</Here>
                                    <Toggle aria-label="Insert stop">+</Toggle>
                                </Travel>
                                <StopItem stop={stops[1]} />
                            </Stops>
                            <Closing>
                                <button>+ Add stop</button>
                                <p>⌂&nbsp; No depots on file — the pull-in is not costed</p>
                                <small>this charter is quoted as though the coach finishes at the last stop</small>
                            </Closing>
                            <FoldRow><span>›</span><strong>AFTER ARRIVAL</strong><span>none</span></FoldRow>
                        </Timeline>
                    </StopsColumn>
                    <RouteMap />
                </Columns>
            </LegBody>
        </LegCard>
    );
}

function App() {
    return (
        <Shell>
            <GlobalStyle />
            <Sidebar>
                <Brand>
                    <svg width="64" height="64" viewBox="0 0 64 64">
                        <defs>
                            <linearGradient id="brand" x1="0" y1="0" x2="1" y2="1">
                                <stop offset="0" stopColor="#e83e8c" />
                                <stop offset="1" stopColor="#7c52f4" />
                            </linearGradient>
                        </defs>
                        <circle cx="32" cy="32" r="32" fill="url(#brand)" />
                        <path d="M15 49L28 14h8l13 35h-8L32 23l-9 26z" fill="white" />
                    </svg>
                    BUSΛBLE
                </Brand>
                <Nav>
                    <ul>
                        {navItems.map(({ label, icon: Icon, children }) => (
                            <li key={label}>
                                <NavLink href={'#' + label} $active={!!children}>
                                    {Icon && <Icon size={40} />}
                                    <span>{label}</span>
                                    {children ? <ChevronDown size={32} /> : <ChevronRight size={32} />}
                                </NavLink>
                                {children && children.map((name) => <SubLink key={name} href={'#' + name}>{name}</SubLink>)}
                            </li>
                        ))}
                    </ul>
                </Nav>
                <SidebarFoot>
                    <Version>v0.0.1</Version>
                    <CollapseButton aria-label="Collapse menu"><ChevronLeft size={32} /></CollapseButton>
                </SidebarFoot>
            </Sidebar>
            <Page>
                <Header>
                    <Heading>
                        <div>Charterable</div>
                        <h1>Charters</h1>
                    </Heading>
                    <SearchBox>
                        <Search size={32} />
                        <input placeholder="Search with Able AI" aria-label="Search with Able AI" />
                        <kbd>⌘K</kbd>
                    </SearchBox>
                    <HeaderTools>
                        <ToolButton aria-label="Apps"><LayoutGrid size={36} /></ToolButton>
                        <OrgButton>
                            <TowerIcon />
                            Busable NSW
                            <ChevronDown size={32} strokeWidth={1.5} />
                        </OrgButton>
                        <ToolButton aria-label="Settings"><FiSettings size={36} /></ToolButton>
                        <ToolButton aria-label="Dark mode"><Moon size={36} /></ToolButton>
                        <Avatar>5</Avatar>
                    </HeaderTools>
                </Header>
                <Content>
                    <BookingCard>
                        <Leg />
                    </BookingCard>
                </Content>
                <BottomBar>
                    <Totals>
                        <span>Booking total</span>
                        <Mono $size={47} $bold>$2,380</Mono>
                        <p>$2,163 + $216 GST · 2 dates × 2 movements</p>
                    </Totals>
                    <Actions>
                        <span>Unsaved changes</span>
                        <TextButton>Undo</TextButton>
                        <TextButton disabled>Redo</TextButton>
                        <TextButton>Reset</TextButton>
                        <hr />
                        <BigButton>Save draft</BigButton>
                        <BigButton $primary>Send quote to customer</BigButton>
                    </Actions>
                </BottomBar>
            </Page>
            <EdgeShade />
        </Shell>
    );
}

export default App;
